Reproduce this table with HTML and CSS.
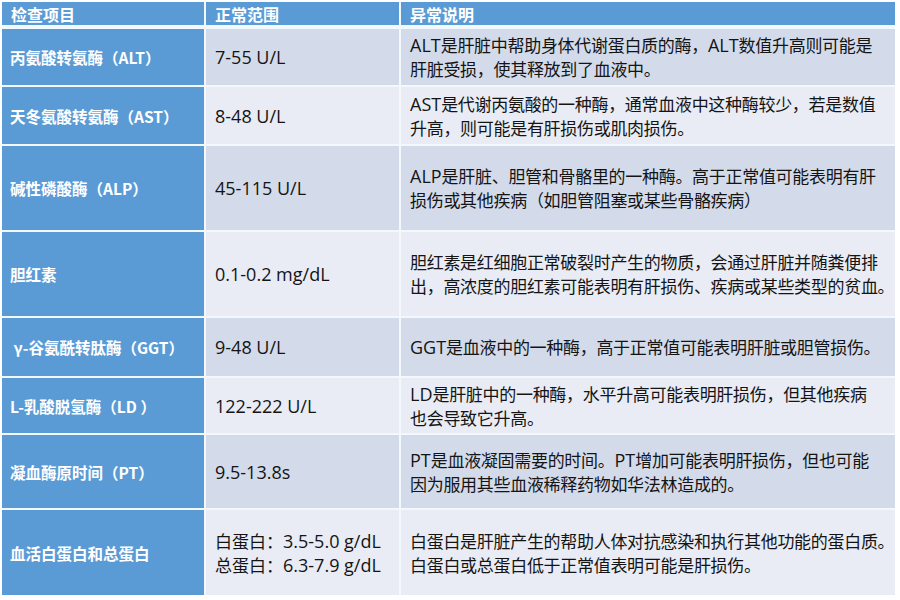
FILE: index.html
```html
<!DOCTYPE html>
<html lang="zh">
<head>
<meta charset="utf-8">
<link rel="stylesheet" href="styles.css">
</head>
<body>
<div class="table">
  <div class="hd">检查项目</div>
  <div class="hd">正常范围</div>
  <div class="hd">异常说明</div>

  <div class="name">丙氨酸转氨酶（ALT）</div>
  <div class="cell range dark"><p>7-55 U/L</p></div>
  <div class="cell dark"><p><span class="l">ALT</span>是肝脏中帮助身体代谢蛋白质的酶，<span class="l">ALT</span>数值升高则可能是<br>肝脏受损，使其释放到了血液中。</p></div>

  <div class="name">天冬氨酸转氨酶（AST）</div>
  <div class="cell range light"><p>8-48 U/L</p></div>
  <div class="cell light"><p><span class="l">AST</span>是代谢丙氨酸的一种酶，通常血液中这种酶较少，若是数值<br>升高，则可能是有肝损伤或肌肉损伤。</p></div>

  <div class="name">碱性磷酸酶（ALP）</div>
  <div class="cell range dark"><p>45-115 U/L</p></div>
  <div class="cell dark"><p><span class="l">ALP</span>是肝脏、胆管和骨骼里的一种酶。高于正常值可能表明有肝<br>损伤或其他疾病（如胆管阻塞或某些骨骼疾病）</p></div>

  <div class="name">胆红素</div>
  <div class="cell range light"><p>0.1-0.2 mg/dL</p></div>
  <div class="cell light"><p>胆红素是红细胞正常破裂时产生的物质，会通过肝脏并随粪便排<br>出，高浓度的胆红素可能表明有肝损伤、疾病或某些类型的贫血。</p></div>

  <div class="name">&nbsp;γ-谷氨酰转肽酶（GGT）</div>
  <div class="cell range dark"><p>9-48 U/L</p></div>
  <div class="cell dark"><p><span class="l">GGT</span>是血液中的一种酶，高于正常值可能表明肝脏或胆管损伤。</p></div>

  <div class="name">L-乳酸脱氢酶（LD ）</div>
  <div class="cell range light"><p>122-222 U/L</p></div>
  <div class="cell light"><p><span class="l">LD</span>是肝脏中的一种酶，水平升高可能表明肝损伤，但其他疾病<br>也会导致它升高。</p></div>

  <div class="name">凝血酶原时间（PT）</div>
  <div class="cell range dark"><p>9.5-13.8s</p></div>
  <div class="cell dark"><p><span class="l">PT</span>是血液凝固需要的时间。<span class="l">PT</span>增加可能表明肝损伤，但也可能<br>因为服用其些血液稀释药物如华法林造成的。</p></div>

  <div class="name">血活白蛋白和总蛋白</div>
  <div class="cell range light"><p><span class="c">白蛋白：</span>3.5-5.0 g/dL<br><span class="c">总蛋白：</span>6.3-7.9 g/dL</p></div>
  <div class="cell light"><p>白蛋白是肝脏产生的帮助人体对抗感染和执行其他功能的蛋白质。<br>白蛋白或总蛋白低于正常值表明可能是肝损伤。</p></div>
</div>
</body>
</html>
```

FILE: styles.css
```css
html, body {
  margin: 0;
  padding: 0;
  background: #ffffff;
}
body {
  padding: 2px 0 0 2px;
  font-family: "Open Sans", "Noto Sans CJK SC", sans-serif;
}
.table {
  display: grid;
  width: 893px;
  grid-template-columns: 202px 193px 494px;
  grid-template-rows: 25px 56px 57px 84px 84px 58px 55px 73px 85px;
  column-gap: 2px;
  row-gap: 2px;
  background: #f3f8fc;
}
.hd {
  background: #5b9bd5;
  color: #ffffff;
  font-family: "Noto Sans CJK SC", sans-serif;
  font-weight: 700;
  font-size: 16px;
  display: flex;
  align-items: center;
  padding-left: 9px;
  margin-bottom: 2px;
}
.name {
  background: #5b9bd5;
  color: #ffffff;
  font-family: "Noto Sans CJK SC", sans-serif;
  font-weight: 700;
  font-size: 15.5px;
  display: flex;
  align-items: center;
  padding-left: 8px;
}
.cell {
  color: #141414;
  font-family: "Noto Sans CJK SC", sans-serif;
  font-size: 17px;
  line-height: 24px;
  display: flex;
  align-items: center;
  padding: 0 0 0 9px;
  white-space: nowrap;
  letter-spacing: -0.3px;
}
.cell p {
  margin: 0;
}
.range {
  font-family: "Open Sans", "Noto Sans CJK SC", sans-serif;
  font-size: 18px;
  letter-spacing: 0;
  padding-left: 9px;
}
.l {
  font-family: "Open Sans", sans-serif;
  font-size: 18px;
  letter-spacing: 0;
}
.c {
  font-family: "Noto Sans CJK SC", sans-serif;
  font-size: 17px;
}
.dark { background: #d3dbea; }
.light { background: #e9ecf4; }
```
